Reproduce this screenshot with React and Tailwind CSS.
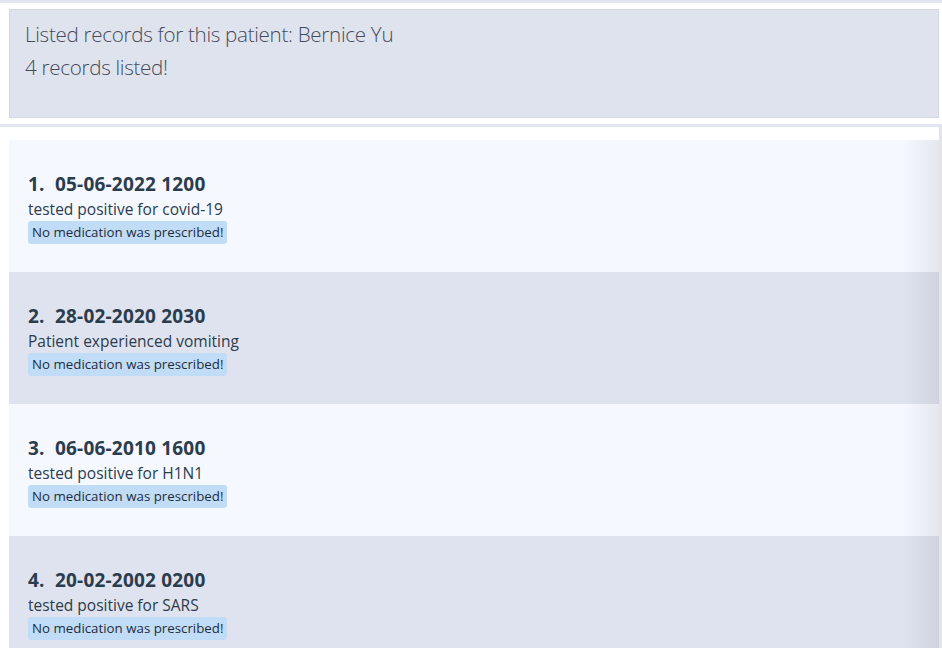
const records = [
  { date: '05-06-2022 1200', desc: 'tested positive for covid-19' },
  { date: '28-02-2020 2030', desc: 'Patient experienced vomiting' },
  { date: '06-06-2010 1600', desc: 'tested positive for H1N1' },
  { date: '20-02-2002 0200', desc: 'tested positive for SARS' },
]

function RecordCard({ index, record }) {
  const odd = index % 2 === 0
  return (
    <div
      className={`h-[132px] shrink-0 pl-[19px] pt-[31px] flex flex-col items-start ${
        odd ? 'bg-[#f5f8ff]' : 'bg-[#dfe3ef]'
      }`}
    >
      <h3 className="text-[19px] leading-[26px] font-bold tracking-[0.2px] text-[#2b3c4c]">
        {index + 1}.&nbsp;&nbsp;{record.date}
      </h3>
      <p className="text-[15.5px] leading-[24px] text-[#2b3c4c]">{record.desc}</p>
      <span className="px-[4px] h-[23px] leading-[23px] text-[13.3px] text-[#1f2d3a] bg-[#c1dcf7] rounded-[3px]">
        No medication was prescribed!
      </span>
    </div>
  )
}

export default function App() {
  return (
    <div
      className="w-[942px] h-[648px] overflow-hidden bg-white relative"
      style={{ fontFamily: '"Open Sans", "Noto Sans", sans-serif' }}
    >
      <div className="h-[3px] bg-[#e3e6f0]" />
      <div className="pt-[6px] pl-[9px] pr-[3px]">
        <div className="h-[109px] border border-[#d3d8e3] bg-[#dfe3ee] pl-[15px] pt-[8px] text-[20.6px] leading-[33px] font-light text-[#464b5a]">
          <p className="tracking-[-0.3px]">Listed records for this patient: Bernice Yu</p>
          <p className="tracking-[-0.3px]">4 records listed!</p>
        </div>
      </div>
      <div className="h-[6px]" />
      <div className="h-[3px] bg-[#e3e6f0]" />
      <div className="h-[13px]" />
      <div className="ml-[9px] w-[930px] flex flex-col relative">
        {records.map((r, i) => (
          <RecordCard key={i} index={i} record={r} />
        ))}
        <div className="absolute top-0 bottom-0 right-0 w-[36px] bg-gradient-to-r from-transparent to-[#000000]/[0.07] pointer-events-none" />
      </div>
      <div className="absolute top-[127px] bottom-0 right-0 w-[3px] bg-[#e4e4e8]" />
    </div>
  )
}
